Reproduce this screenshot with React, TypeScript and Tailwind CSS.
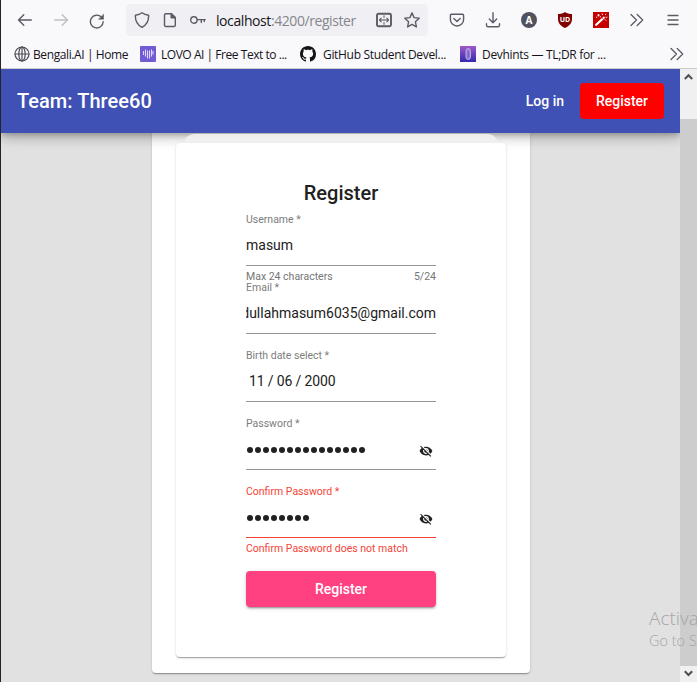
import type { ReactNode } from "react";

const uiFont = "font-['Open_Sans','Noto_Sans',sans-serif]";

function Stroke({ size = 16, w = 1.4, className = "", children }: { size?: number; w?: number; className?: string; children: ReactNode }) {
  return (
    <svg width={size} height={size} viewBox="0 0 16 16" fill="none" stroke="currentColor" strokeWidth={w} strokeLinecap="round" strokeLinejoin="round" className={`shrink-0 ${className}`}>
      {children}
    </svg>
  );
}

function Cell({ children, className = "" }: { children: ReactNode; className?: string }) {
  return <div className={`flex w-9 shrink-0 items-center justify-center ${className}`}>{children}</div>;
}

function Chevrons() {
  return (
    <Stroke w={1.3}>
      <path d="M2 2.5 7.5 8 2 13.5M8.2 2.5 13.7 8 8.2 13.5" />
    </Stroke>
  );
}

function Toolbar() {
  return (
    <div className="flex h-10 items-center pl-[7px] text-[#5b5b66]">
      <Cell>
        <Stroke><path d="M14.3 8H1.5M6.8 2.7 1.5 8l5.3 5.3" /></Stroke>
      </Cell>
      <Cell className="text-[#bdbdc3]">
        <Stroke><path d="M1.7 8h12.8M9.2 2.7 14.5 8l-5.3 5.3" /></Stroke>
      </Cell>
      <Cell>
        <Stroke className="mt-px">
          <path d="M14.2 8.8A6.4 6.4 0 1 1 12.3 4" />
          <path d="M14.5 1.6v4.6H9.9z" fill="currentColor" strokeWidth=".6" />
        </Stroke>
      </Cell>
      <div className="ml-[11px] flex h-8 w-[302px] shrink-0 items-center rounded bg-[#f0f0f4] pl-2">
        <Stroke><path d="M8 .8c2.1 1.5 4.2 2.1 6.6 2.4.3 5-1.2 9.2-6.6 12.2C2.600 12.400 1.100 8.200 1.400 3.200 3.800 2.900 5.900 2.300 8 .8z" /></Stroke>
        <Stroke className="ml-3">
          <path d="M3.800 1.700h5.700l3.800 3.800v7.700a1.300 1.300 0 0 1-1.300 1.300H3.800a1.300 1.300 0 0 1-1.300-1.300V3a1.300 1.300 0 0 1 1.300-1.300z" />
          <path d="M9.200 1.700v4h4z" fill="currentColor" />
        </Stroke>
        <Stroke className="ml-3">
          <circle cx="3.900" cy="8" r="3.200" />
          <path d="M7.200 7.600h8M11.300 7.800v2.700M14.300 7.800v1.800" />
        </Stroke>
        <div className={`ml-[10px] w-[160px] whitespace-nowrap pt-[2px] text-[14px] leading-5 tracking-[-0.42px] text-[#15141a] ${uiFont}`}>
          localhost<span className="text-[#85858c]">:4200/register</span>
        </div>
        <Stroke w={1.500}>
          <rect x="1" y="1.700" width="14" height="12.600" rx="1.500" strokeWidth="1.900" />
          <path d="M3.700 8h3M12.300 8h-3M5.200 6.200 3.500 8l1.700 1.800M10.800 6.200 12.500 8l-1.700 1.800M8 3.700v1.500M8 7.300v1.400M8 10.800v1.500" strokeWidth="1.100" />
        </Stroke>
        <Stroke className="ml-3">
          <path d="m8 .9 2.100 4.700 5.100.6-3.800 3.500 1 5.200L8 12.300l-4.400 2.600 1-5.200L.8 6.200l5.100-.6z" />
        </Stroke>
      </div>
      <Cell className="ml-[11px]">
        <Stroke>
          <path d="M2.600 2.200h10.800a1.200 1.200 0 0 1 1.200 1.200v4a6.600 6.600 0 0 1-13.200 0v-4a1.200 1.200 0 0 1 1.200-1.200z" />
          <path d="M4.800 6.400 8 9.400l3.200-3" />
        </Stroke>
      </Cell>
      <Cell>
        <Stroke><path d="M8 .8v9.700M4.300 7 8 10.700 11.700 7M1.500 11.700v1.600a1.400 1.400 0 0 0 1.400 1.400h10.200a1.400 1.400 0 0 0 1.400-1.400v-1.600" /></Stroke>
      </Cell>
      <Cell>
        <div className="flex size-4 items-center justify-center rounded-full bg-[#52525e] font-['Open_Sans',sans-serif] text-[10px] font-bold leading-none text-white">A</div>
      </Cell>
      <Cell>
        <div className="relative flex size-4 items-center justify-center">
          <svg width="16" height="16" viewBox="0 0 16 16" className="absolute inset-0">
            <path d="M8 0c2 1.500 4.300 2 7 2v5c0 4-2.400 6.800-7 9-4.600-2.200-7-5-7-9V2c2.700 0 5-.5 7-2z" fill="#800000" />
          </svg>
          <span className="relative -top-px font-['Open_Sans',sans-serif] text-[7px] font-bold leading-none text-white">UD</span>
        </div>
      </Cell>
      <Cell>
        <svg width="16" height="16" viewBox="0 0 16 16" fill="none" stroke="#fff">
          <path d="M0 0h16v16H0z" fill="#c40000" stroke="none" />
          <path d="m3.200 12.800 7.600-7.100" strokeWidth="2.200" strokeLinecap="round" />
          <path d="m9 5.600 1.800 1.900" stroke="#c40000" strokeWidth=".7" />
          <path d="M5.500 2v2.400M4.300 3.200h2.400M9.300 1.500v1.600M12.200 2.800l1-1M3 5.200h1.300M12.700 5.300h1.600M11.900 7.400l1.200 1.200M7.300 4.200v1.200" strokeWidth=".9" />
        </svg>
      </Cell>
      <Cell><Chevrons /></Cell>
      <Cell>
        <Stroke><path d="M2.500 3.500h11M2.500 8h11M2.500 12.500h11" strokeLinecap="butt" /></Stroke>
      </Cell>
    </div>
  );
}

function Bookmark({ icon, label, className }: { icon: ReactNode; label: string; className: string }) {
  return (
    <div className={`flex shrink-0 items-center whitespace-nowrap ${className}`}>
      {icon}
      <span className="pt-[2px]">{label}</span>
    </div>
  );
}

function Bookmarks() {
  return (
    <div className={`flex h-7 items-center pl-[14px] text-[12px] leading-4 text-[#15141a] ${uiFont}`}>
      <Bookmark
        className="w-[126px] gap-[3px] tracking-[-0.4px]"
        label="Bengali.AI | Home"
        icon={
          <Stroke w={1.200} className="text-[#4c4c57]">
            <circle cx="8" cy="8" r="7" />
            <ellipse cx="8" cy="8" rx="3.200" ry="7" />
            <path d="M1 8h14M8 1v14" />
          </Stroke>
        }
      />
      <Bookmark
        className="w-[160px] gap-[5px] tracking-[-0.46px]"
        label="LOVO AI | Free Text to ..."
        icon={
          <svg width="16" height="16" viewBox="0 0 16 16" className="shrink-0">
            <rect width="16" height="16" rx="1" fill="#725ad2" />
            <path d="M3.500 5v4M5.500 3.500v7M7.500 4.500v8M9.500 4.500v8M11.500 3.500v7M13 5v3.500" stroke="#ddd6ff" strokeWidth="1.100" />
          </svg>
        }
      />
      <Bookmark
        className="w-[160px] gap-[7px] tracking-[-0.32px]"
        label="GitHub Student Devel..."
        icon={
          <svg width="16" height="16" viewBox="0 0 16 16" fill="#15141a" className="shrink-0">
            <path d="M8 0C3.580 0 0 3.580 0 8c0 3.540 2.290 6.530 5.470 7.590.4.070.55-.17.55-.38 0-.19-.01-.82-.01-1.490-2.010.37-2.530-.49-2.690-.94-.09-.23-.48-.94-.82-1.130-.28-.15-.68-.52-.01-.53.63-.01 1.080.58 1.230.82.72 1.210 1.870.87 2.330.66.07-.52.28-.87.51-1.070-1.780-.2-3.640-.89-3.640-3.950 0-.87.31-1.590.82-2.150-.08-.2-.36-1.020.08-2.120 0 0 .67-.21 2.200.82.64-.18 1.320-.27 2-.27s1.360.09 2 .27c1.530-1.040 2.200-.82 2.200-.82.44 1.100.16 1.920.08 2.120.51.56.82 1.270.82 2.150 0 3.070-1.870 3.750-3.650 3.950.29.25.54.73.54 1.480 0 1.070-.01 1.930-.01 2.200 0 .21.15.46.55.38A8.010 8.010 0 0 0 16 8c0-4.420-3.580-8-8-8z" />
          </svg>
        }
      />
      <Bookmark
        className="w-[209px] gap-[6px] tracking-[-0.32px]"
        label="Devhints — TL;DR for ..."
        icon={
          <svg width="16" height="16" viewBox="0 0 16 16" className="shrink-0">
            <defs>
              <linearGradient id="devhints" x2="0" y2="1">
                <stop stopColor="#9d5ac9" />
                <stop offset="1" stopColor="#3528ad" />
              </linearGradient>
            </defs>
            <path fill="url(#devhints)" d="M0 0h16v16H0z" />
            <rect x="6" y="2.500" width="4.500" height="11" rx="2.200" fill="#a899df" fillOpacity=".7" stroke="#b6a9e6" />
            <path d="M8.200 5v6" stroke="#6a50bd" />
          </svg>
        }
      />
      <div className="text-[#5b5b66]"><Chevrons /></div>
    </div>
  );
}

function EyeOff() {
  return (
    <svg width="14" height="14" viewBox="0 0 24 24" fill="#212121" className="mr-[3.5px] mt-[4px] shrink-0">
      <path d="M12 7c2.760 0 5 2.240 5 5 0 .65-.13 1.260-.36 1.830l2.920 2.920c1.510-1.260 2.700-2.890 3.430-4.750-1.730-4.390-6-7.500-11-7.500-1.400 0-2.740.25-3.980.7l2.160 2.160C10.740 7.130 11.350 7 12 7zM2 4.270l2.280 2.280.46.46A11.804 11.804 0 0 0 1 12c1.730 4.390 6 7.500 11 7.500 1.550 0 3.030-.3 4.380-.84l.42.42L19.730 22 21 20.730 3.270 3 2 4.270zM7.530 9.800l1.550 1.550c-.05.21-.08.43-.08.65 0 1.660 1.340 3 3 3 .22 0 .44-.03.65-.08l1.550 1.550c-.67.33-1.410.53-2.200.53-2.760 0-5-2.240-5-5 0-.79.2-1.530.53-2.200zm4.310-.78 3.150 3.150.02-.16c0-1.660-1.340-3-3-3l-.17.01z" />
    </svg>
  );
}

function Dots({ count }: { count: number }) {
  return (
    <div className="flex gap-[1.5px] pl-[0.75px] pt-[2px]">
      {Array.from({ length: count }, (_, i) => (
        <span key={i} className="size-[6.5px] rounded-full bg-[#212121]" />
      ))}
    </div>
  );
}

function Field({ label, children, hint, error = false }: { label: string; children: ReactNode; hint?: ReactNode; error?: boolean }) {
  return (
    <div className="flex h-[68px] flex-col">
      <div className={`h-3 shrink-0 text-[10.500px] leading-[14px] ${error ? "text-[#f44336]" : "text-[#7d7d7d]"}`}>{label}</div>
      <div className="flex h-10 shrink-0 items-center justify-between overflow-hidden whitespace-nowrap text-[14px] leading-5 text-[#212121]">{children}</div>
      <div className={`h-px shrink-0 ${error ? "bg-[#f44336]" : "bg-[#949494]"}`} />
      {hint && <div className={`flex shrink-0 justify-between pt-[5px] text-[10.500px] leading-3 ${error ? "text-[#f44336]" : "text-[#757575]"}`}>{hint}</div>}
    </div>
  );
}

export default function App() {
  return (
    <div className="relative flex h-[682px] w-[697px] flex-col overflow-hidden border-l border-[#252326] bg-[#f9f9fb] font-['Roboto',sans-serif]">
      <div className="-ml-px flex h-[69px] shrink-0 flex-col border-b border-[#cccccf]">
        <Toolbar />
        <Bookmarks />
      </div>
      <div className="flex min-h-0 flex-1">
        <div className="flex w-[679px] shrink-0 flex-col overflow-hidden bg-[#e1e1e1]">
          <header className="relative z-10 flex h-16 shrink-0 items-center bg-[#3f51b5] px-4 text-white shadow-[0_3px_5px_-1px_rgba(0,0,0,.2),0_6px_10px_0_rgba(0,0,0,.14),0_1px_18px_0_rgba(0,0,0,.12)]">
            <h1 className="flex-1 text-[20px] font-medium leading-8 tracking-[0.04px]">Team: Three60</h1>
            <button className="h-9 px-4 text-[14px] font-medium">Log in</button>
            <button className="h-9 w-[84px] rounded bg-[#ff0000] text-[14px] font-medium">Register</button>
          </header>
          <main className="ml-[151px] h-[540px] w-[378px] shrink-0 rounded-b bg-white px-6 pt-px shadow-[0_2px_1px_-1px_rgba(0,0,0,.2),0_1px_1px_0_rgba(0,0,0,.14),0_1px_3px_0_rgba(0,0,0,.12)]">
            <div className="relative z-20 mx-2 -mb-1 h-3 rounded-t-[10px] bg-linear-to-b from-[#ececec] to-[#f5f5f5]" />
            <section className="relative z-20 mt-px h-[514px] rounded bg-white px-[70px] pt-[34px] shadow-[0_2px_1px_-1px_rgba(0,0,0,.2),0_1px_1px_0_rgba(0,0,0,.14),0_1px_3px_0_rgba(0,0,0,.12)]">
              <h2 className="h-9 text-center text-[20px] font-medium leading-8 text-[#212121]">Register</h2>
              <form>
                <Field label="Username *" hint={<><span>Max 24 characters</span><span>5/24</span></>}>masum</Field>
                <Field label="Email *">
                  <div className="flex w-full justify-end overflow-hidden"><span>abdullahmasum6035@gmail.com</span></div>
                </Field>
                <Field label="Birth date select *"><span className="pl-[3px] tracking-[-0.14px]">11 / 06 / 2000</span></Field>
                <Field label="Password *"><Dots count={15} /><EyeOff /></Field>
                <Field label="Confirm Password *" error hint="Confirm Password does not match"><Dots count={8} /><EyeOff /></Field>
                <button type="button" className="mt-[18px] h-9 w-full rounded bg-[#ff4081] text-[14px] font-medium text-white shadow-[0_3px_1px_-2px_rgba(0,0,0,.2),0_2px_2px_0_rgba(0,0,0,.14),0_1px_5px_0_rgba(0,0,0,.12)]">Register</button>
              </form>
            </section>
          </main>
        </div>
        <div className="flex w-[17px] shrink-0 flex-col items-center justify-between bg-[linear-gradient(#f0f0f0_50px,#cdcdcd_50px,#cdcdcd_597px,#f0f0f0_597px)] py-1 text-[#505050]">
          <svg width="9" height="8" viewBox="0 0 9 8" fill="none" stroke="currentColor" strokeWidth="2"><path d="m.8 6 3.700-3.800L8.200 6" /></svg>
          <svg width="9" height="8" viewBox="0 0 9 8" fill="none" stroke="currentColor" strokeWidth="2"><path d="m.8 1.200 3.700 3.800 3.700-3.800" /></svg>
        </div>
      </div>
      <div className={`absolute left-[648px] top-[605px] z-20 whitespace-nowrap text-[#a6a6a6] ${uiFont}`}>
        <div className="text-[19px] font-light leading-[26px]">Activate Windows</div>
        <div className="text-[14.500px] font-light leading-[20px]">Go to Settings to activate Windows.</div>
      </div>
    </div>
  );
}
